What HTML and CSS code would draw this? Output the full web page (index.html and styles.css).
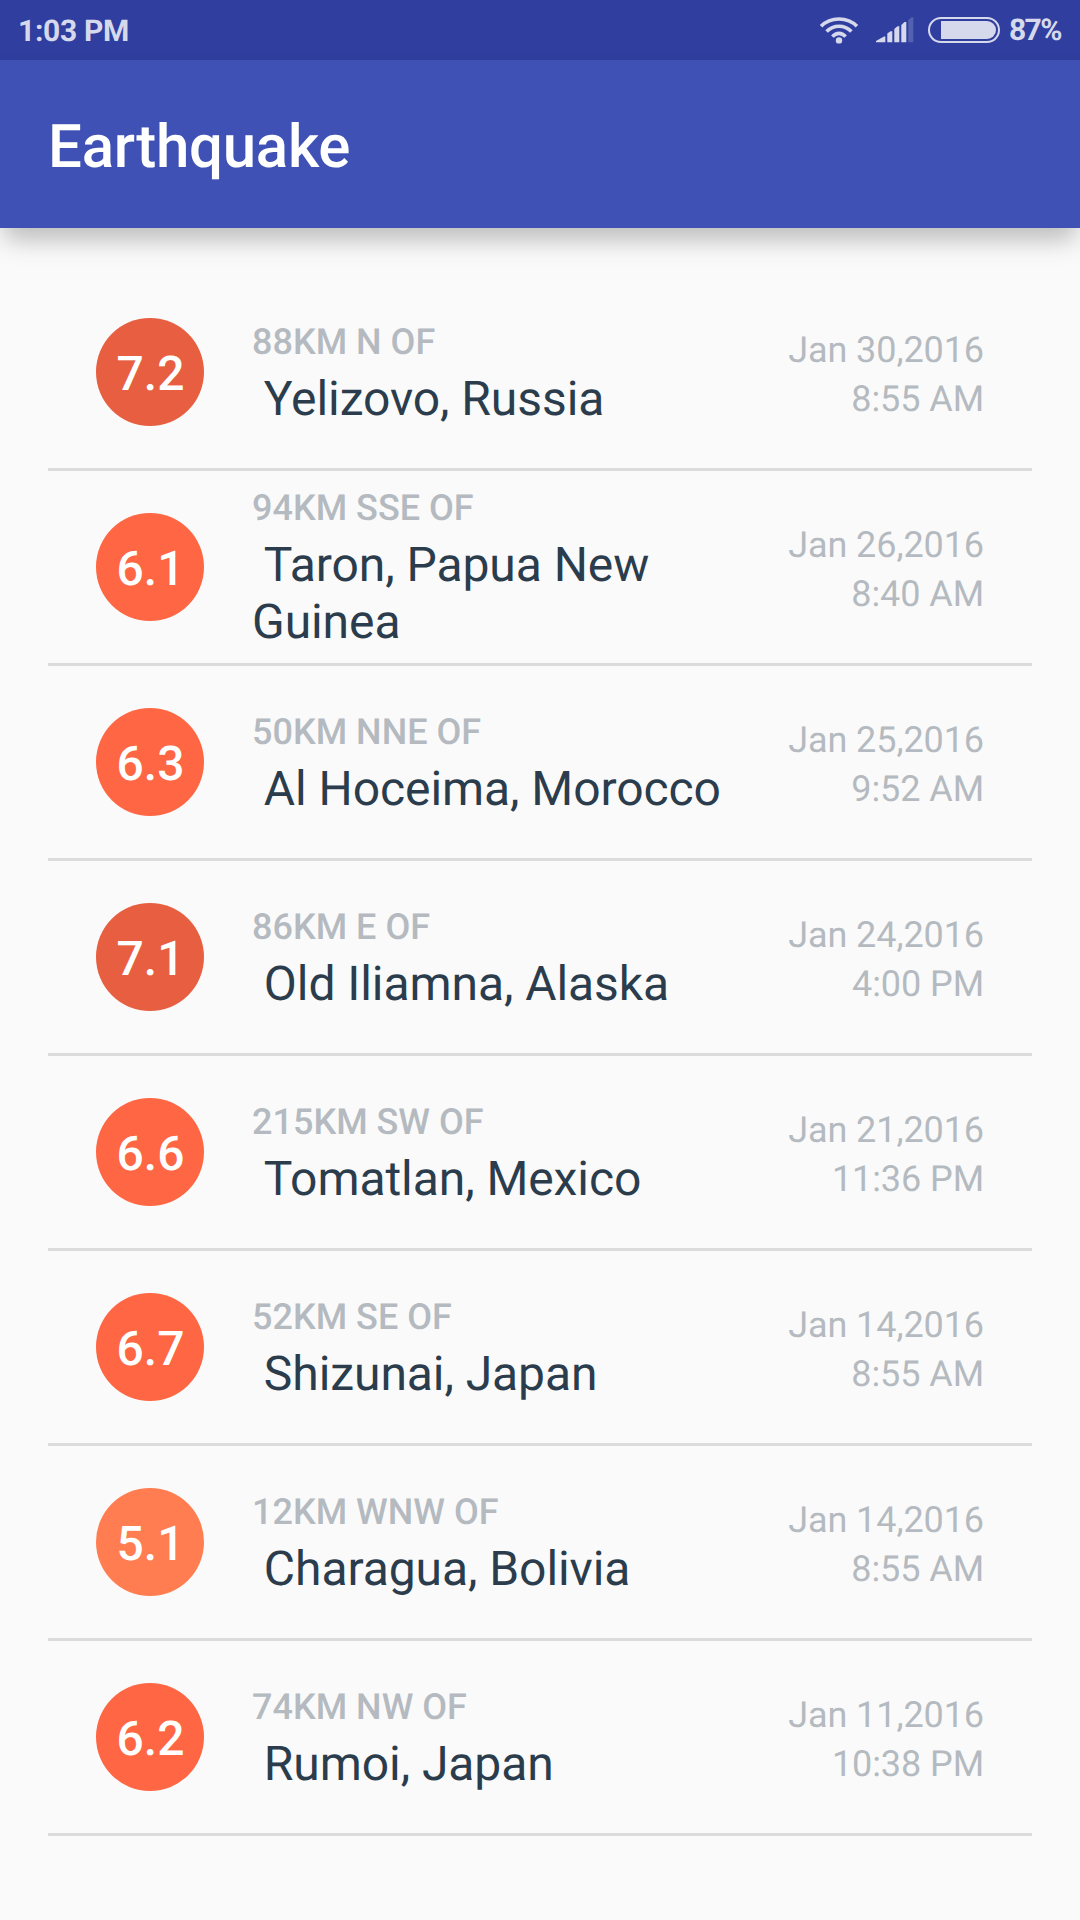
FILE: index.html
```html
<!DOCTYPE html>
<html lang="en">
<head>
<meta charset="utf-8">
<title>Earthquake</title>
<link rel="stylesheet" href="styles.css">
</head>
<body>
<div class="status-bar">
  <span class="clock">1:03 PM</span>
  <div class="indicators">
    <svg class="wifi" width="40" height="30" viewBox="0 0 40 30">
      <g fill="none" stroke="#d6d9ec" stroke-width="3.6">
        <path d="M2.1 11.2C11.5 1.5 28.5 1.5 37.9 11.2"/>
        <path d="M7.6 16.6C14.5 9.4 25.5 9.4 32.4 16.6"/>
        <path d="M13.4 21.6C17.3 17.3 22.7 17.3 26.6 21.6"/>
      </g>
      <circle cx="20" cy="25.4" r="3.2" fill="#d6d9ec"/>
    </svg>
    <svg class="signal" width="38" height="26" viewBox="0 0 38 26" fill="#d6d9ec">
      <path d="M0 25.3V24L8 19.5H9.3V25.3Z"/>
      <path d="M11.3 25.3V16.5L14.5 14.3H16.3V25.3Z"/>
      <path d="M18.3 25.3V12L21.5 9.3H23.3V25.3Z"/>
      <path d="M25.3 25.3V8L28.5 5H30.3V25.3Z"/>
      <path d="M32.3 25.3V3L35.5 0.3H37.3V25.3Z" opacity=".22"/>
    </svg>
    <svg class="battery" width="72" height="26" viewBox="0 0 72 26">
      <rect x="1" y="1" width="70" height="24" rx="12" fill="none" stroke="#d6d9ec" stroke-width="2"/>
      <path d="M13 4H59A9 9 0 0 1 59 22H13Z" fill="#d6d9ec"/>
    </svg>
    <span class="percent">87%</span>
  </div>
</div>
<header class="app-bar"><h1 class="title">Earthquake</h1></header>
<main class="quakes">
  <article class="quake"><span class="magnitude level-7">7.2</span><div class="place"><span class="offset">88KM N OF</span><span class="location"> Yelizovo, Russia</span></div><div class="when"><span>Jan 30,2016</span><span>8:55 AM</span></div></article>
  <article class="quake"><span class="magnitude level-6">6.1</span><div class="place"><span class="offset">94KM SSE OF</span><span class="location"> Taron, Papua New Guinea</span></div><div class="when"><span>Jan 26,2016</span><span>8:40 AM</span></div></article>
  <article class="quake"><span class="magnitude level-6">6.3</span><div class="place"><span class="offset">50KM NNE OF</span><span class="location"> Al Hoceima, Morocco</span></div><div class="when"><span>Jan 25,2016</span><span>9:52 AM</span></div></article>
  <article class="quake"><span class="magnitude level-7">7.1</span><div class="place"><span class="offset">86KM E OF</span><span class="location"> Old Iliamna, Alaska</span></div><div class="when"><span>Jan 24,2016</span><span>4:00 PM</span></div></article>
  <article class="quake"><span class="magnitude level-6">6.6</span><div class="place"><span class="offset">215KM SW OF</span><span class="location"> Tomatlan, Mexico</span></div><div class="when"><span>Jan 21,2016</span><span>11:36 PM</span></div></article>
  <article class="quake"><span class="magnitude level-6">6.7</span><div class="place"><span class="offset">52KM SE OF</span><span class="location"> Shizunai, Japan</span></div><div class="when"><span>Jan 14,2016</span><span>8:55 AM</span></div></article>
  <article class="quake"><span class="magnitude level-5">5.1</span><div class="place"><span class="offset">12KM WNW OF</span><span class="location"> Charagua, Bolivia</span></div><div class="when"><span>Jan 14,2016</span><span>8:55 AM</span></div></article>
  <article class="quake"><span class="magnitude level-6">6.2</span><div class="place"><span class="offset">74KM NW OF</span><span class="location"> Rumoi, Japan</span></div><div class="when"><span>Jan 11,2016</span><span>10:38 PM</span></div></article>
</main>
</body>
</html>
```

FILE: styles.css
```css
* { box-sizing: border-box; }
body {
  margin: 0;
  height: 1920px;
  overflow: hidden;
  background: #fafafa;
  font-family: Roboto, sans-serif;
  text-rendering: geometricPrecision;
}
.status-bar {
  display: flex;
  align-items: center;
  justify-content: space-between;
  height: 60px;
  padding: 0 18px;
  background: #303f9f;
  color: #d6d9ec;
  font-size: 30px;
  font-weight: 700;
  letter-spacing: -.3px;
}
.clock { padding-top: 2px; }
.indicators { display: flex; align-items: center; }
.signal { margin-left: 17px; }
.battery { margin-left: 14px; }
.percent {
  width: 53px;
  margin-left: 9px;
  padding-top: 1px;
  letter-spacing: -1.6px;
}
.app-bar {
  display: flex;
  align-items: center;
  height: 168px;
  padding: 5px 48px 0;
  background: #3f51b5;
  box-shadow: 0 15px 24px -4px rgba(0, 0, 0, .26);
}
.title {
  margin: 0;
  color: #fff;
  font-size: 60px;
  font-weight: 500;
  letter-spacing: -.25px;
}
.quakes { padding: 48px 48px 0; }
.quake {
  display: flex;
  align-items: center;
  height: 195px;
  padding: 0 48px;
  border-bottom: 3px solid #dbdbdb;
}
.magnitude {
  display: flex;
  align-items: center;
  justify-content: center;
  flex: none;
  width: 108px;
  height: 108px;
  padding: 2px 0 0 1px;
  border-radius: 50%;
  color: #fff;
  font-size: 48px;
  font-weight: 500;
}
.level-5 { background: #ff7d50; }
.level-6 { background: #ff6643; }
.level-7 { background: #e75f40; }
.place {
  display: flex;
  flex-direction: column;
  gap: 7px;
  flex: 2 0 0;
  margin-left: 48px;
  padding-top: 3.5px;
}
.offset {
  color: #b4bac0;
  font-size: 36px;
  font-weight: 500;
  line-height: 42px;
}
.location {
  color: #2b3d4d;
  font-size: 48px;
  line-height: 57px;
  letter-spacing: -.07px;
  white-space: pre-wrap;
}
.when {
  display: flex;
  flex-direction: column;
  gap: 7px;
  flex: 1 0 0;
  padding-top: 4px;
  color: #b4bac0;
  font-size: 36px;
  line-height: 42px;
  letter-spacing: -.08px;
  text-align: right;
}
```
